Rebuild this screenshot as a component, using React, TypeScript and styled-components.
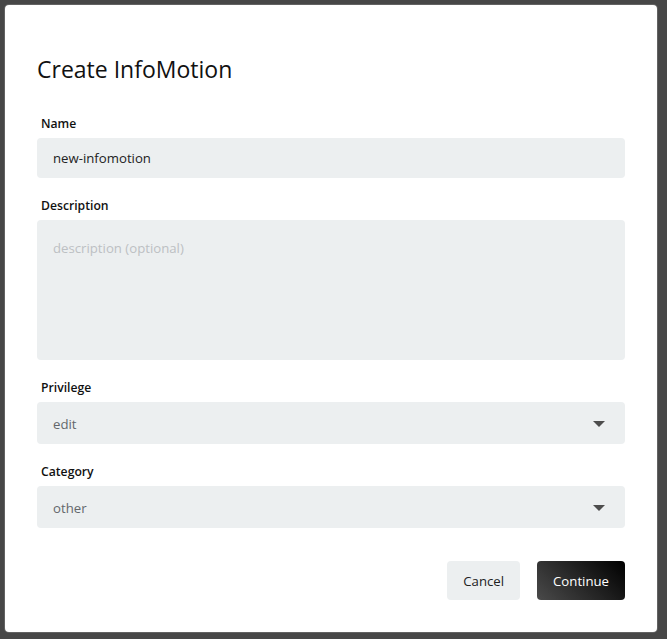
import styled, { createGlobalStyle } from "styled-components";
import { useState } from "react";

const GlobalStyle = createGlobalStyle`
  body {
    margin: 0;
    background: #474747;
    font-family: "Open Sans", "Noto Sans", sans-serif;
  }
`;

const Backdrop = styled.div`
  min-height: 639px;
  padding: 5px;
  box-sizing: border-box;
`;

const Modal = styled.div`
  width: 652px;
  box-sizing: border-box;
  background: #ffffff;
  border-radius: 4px;
  box-shadow: 0 0 0 1px rgba(255, 255, 255, 0.15);
  padding: 48px 32px 32px;
`;

const Title = styled.h2`
  margin: 0 0 32px;
  font-size: 23px;
  line-height: 32px;
  font-weight: 400;
  color: #111111;
`;

const Field = styled.div<{ $last?: boolean }>`
  display: flex;
  flex-direction: column;
  gap: 7px;
  margin-bottom: ${(p) => (p.$last ? "0" : "21px")};
`;

const Label = styled.label`
  padding-left: 4px;
  font-size: 12.2px;
  line-height: 14px;
  font-weight: 600;
  color: #111111;
`;

const Input = styled.input`
  height: 40px;
  box-sizing: border-box;
  border: none;
  border-radius: 4px;
  background: #eceff0;
  padding: 8px 16px;
  font: inherit;
  font-size: 13.2px;
  color: #222222;
  outline: none;
`;

const TextArea = styled.textarea`
  height: 140px;
  box-sizing: border-box;
  border: none;
  border-radius: 4px;
  background: #eceff0;
  padding: 16px;
  font: inherit;
  font-size: 13.2px;
  line-height: 24px;
  color: #222222;
  resize: none;
  outline: none;
  &::placeholder {
    color: #bcc0c3;
  }
`;

const SelectWrap = styled.div`
  position: relative;
  display: flex;
`;

const Select = styled.select`
  flex: 1;
  height: 42px;
  border: none;
  border-radius: 4px;
  background: #eceff0;
  padding: 2px 16px 0;
  font: inherit;
  font-size: 13.2px;
  color: #63676b;
  appearance: none;
  outline: none;
`;

const Caret = styled.span`
  position: absolute;
  right: 20px;
  top: 19px;
  width: 0;
  height: 0;
  border-left: 6px solid transparent;
  border-right: 6px solid transparent;
  border-top: 6px solid #4d4d4d;
  pointer-events: none;
`;

const Actions = styled.div`
  display: flex;
  justify-content: flex-end;
  gap: 17px;
  margin-top: 33px;
`;

const Button = styled.button<{ $primary?: boolean }>`
  height: 39px;
  padding: 0 16px;
  border: none;
  border-radius: 4px;
  font: inherit;
  font-size: 13.2px;
  cursor: pointer;
  color: ${(p) => (p.$primary ? "#ffffff" : "#222222")};
  background: ${(p) =>
    p.$primary ? "linear-gradient(45deg, #4a4a4a 0%, #000000 100%)" : "#eceff0"};
`;

const App = () => {
  const [name, setName] = useState("new-infomotion");
  const [privilege, setPrivilege] = useState("edit");
  const [category, setCategory] = useState("other");

  return (
    <>
      <GlobalStyle />
      <Backdrop>
        <Modal>
          <Title>Create InfoMotion</Title>
          <Field>
            <Label>Name</Label>
            <Input value={name} onChange={(e) => setName(e.target.value)} />
          </Field>
          <Field>
            <Label>Description</Label>
            <TextArea placeholder="description (optional)" />
          </Field>
          <Field>
            <Label>Privilege</Label>
            <SelectWrap>
              <Select value={privilege} onChange={(e) => setPrivilege(e.target.value)}>
                <option value="edit">edit</option>
                <option value="view">view</option>
              </Select>
              <Caret />
            </SelectWrap>
          </Field>
          <Field $last>
            <Label>Category</Label>
            <SelectWrap>
              <Select value={category} onChange={(e) => setCategory(e.target.value)}>
                <option value="other">other</option>
                <option value="finance">finance</option>
              </Select>
              <Caret />
            </SelectWrap>
          </Field>
          <Actions>
            <Button>Cancel</Button>
            <Button $primary>Continue</Button>
          </Actions>
        </Modal>
      </Backdrop>
    </>
  );
};

export default App;
